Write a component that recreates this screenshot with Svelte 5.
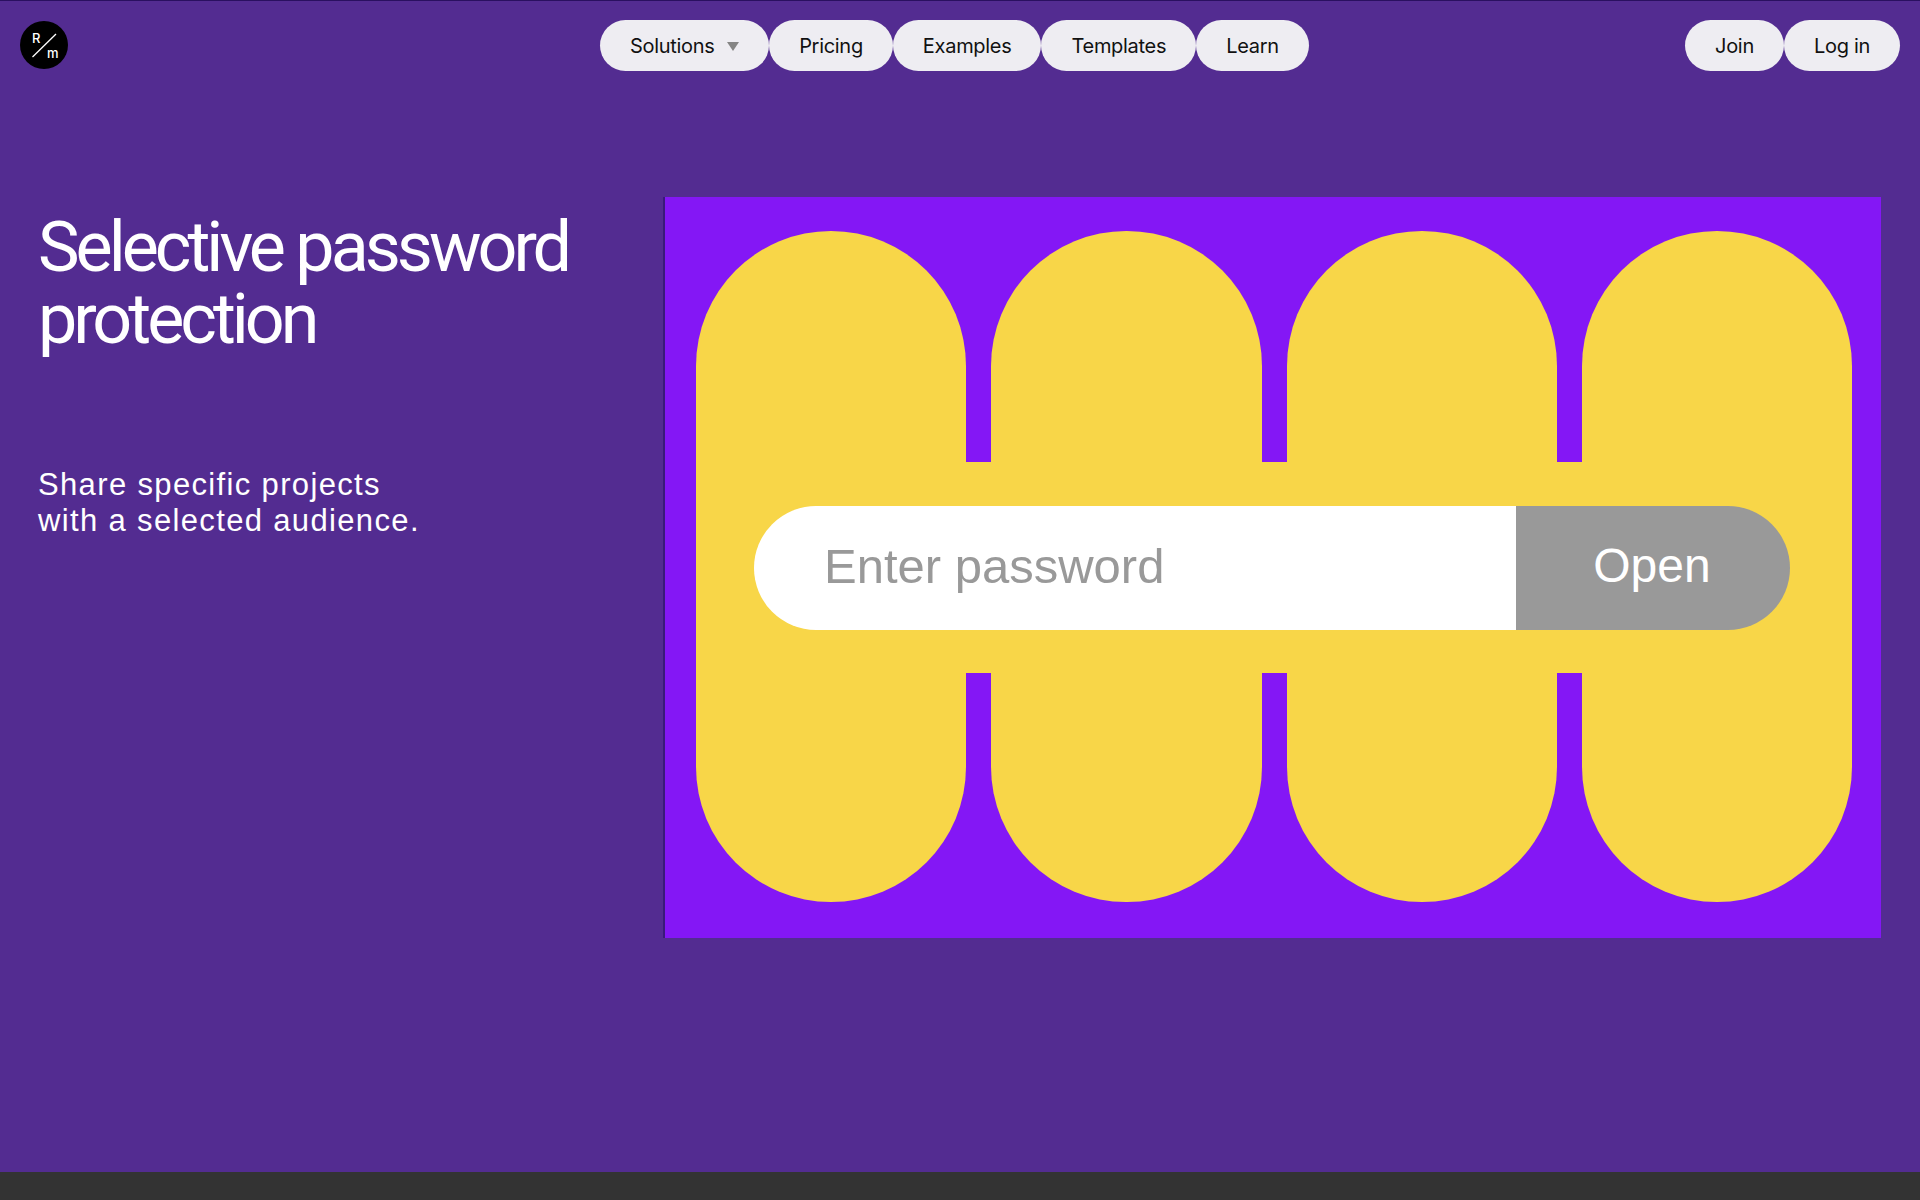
<script>
  const links = ['Pricing', 'Examples', 'Templates', 'Learn'];
  const pillars = [0, 1, 2, 3];
</script>

<div class="page">
  <header class="topbar">
    <a class="logo" href="#home" aria-label="Home">
      <svg width="48" height="48" viewBox="0 0 48 48">
        <circle cx="24" cy="24" r="24" fill="#000" />
        <line x1="12.5" y1="36" x2="36" y2="13" stroke="#fff" stroke-width="1.3" />
        <text x="12" y="22" class="logo-text">R</text>
        <text x="27" y="37" class="logo-text">m</text>
      </svg>
    </a>

    <nav class="nav">
      <button class="pill solutions">
        Solutions
        <span class="caret"></span>
      </button>
      {#each links as link}
        <button class="pill">{link}</button>
      {/each}
    </nav>

    <div class="account">
      <button class="pill">Join</button>
      <button class="pill">Log in</button>
    </div>
  </header>

  <main class="hero">
    <div class="copy">
      <h1>Selective password<br />protection</h1>
      <p>Share specific projects<br />with a selected audience.</p>
    </div>

    <div class="art">
      <div class="pillars">
        {#each pillars as p}
          <div class="pillar"></div>
        {/each}
      </div>
      <div class="band">
        <form class="password" on:submit|preventDefault>
          <input type="text" placeholder="Enter password" />
          <button type="submit">Open</button>
        </form>
      </div>
    </div>
  </main>

  <footer class="footer"></footer>
</div>

<style>
  :global(body) {
    background: #532c91;
  }

  .page {
    display: flex;
    flex-direction: column;
    height: 1200px;
    background: #532c91;
    border-top: 1px solid #2a1060;
    box-sizing: border-box;
    overflow: hidden;
  }

  .topbar {
    display: grid;
    grid-template-columns: 580px auto 1fr;
    align-items: flex-start;
    padding: 19px 20px 0 20px;
  }

  .logo {
    display: block;
    width: 48px;
    height: 48px;
    margin-top: 1px;
  }

  .logo svg {
    display: block;
  }

  .logo-text {
    font-family: 'Inter', sans-serif;
    font-size: 13px;
    font-weight: 500;
    fill: #fff;
  }

  .nav {
    display: flex;
  }

  .account {
    display: flex;
    justify-content: flex-end;
  }

  .pill {
    display: flex;
    align-items: center;
    height: 51px;
    padding: 0 30px;
    border: none;
    border-radius: 26px;
    background: #eeedf2;
    color: #111;
    font-family: 'Inter', sans-serif;
    font-size: 20px;
    letter-spacing: -0.3px;
    cursor: pointer;
  }

  .solutions {
    gap: 12.6px;
  }

  .caret {
    width: 0;
    height: 0;
    margin-top: 1px;
    border-left: 6.5px solid transparent;
    border-right: 6.5px solid transparent;
    border-top: 9px solid #858585;
  }

  .hero {
    flex: 1;
    display: flex;
    align-items: flex-start;
    padding-top: 126px;
  }

  .copy {
    flex: none;
    width: 663px;
    padding-left: 38px;
    box-sizing: border-box;
    color: #fff;
    font-family: 'Liberation Sans', sans-serif;
  }

  h1 {
    margin: 14px 0 0;
    font-family: 'Roboto', sans-serif;
    font-size: 70px;
    font-weight: 400;
    line-height: 72px;
    letter-spacing: -4px;
  }

  p {
    margin: 112px 0 0;
    font-size: 31px;
    line-height: 35.5px;
    letter-spacing: 1.35px;
  }

  .art {
    flex: none;
    position: relative;
    width: 1218px;
    height: 741px;
    box-sizing: border-box;
    padding: 34px 0 0 31px;
    background: #8417f5;
    border-left: 2px solid #3a1a7a;
  }

  .pillars {
    display: flex;
    gap: 25px;
  }

  .pillar {
    width: 270.25px;
    height: 671px;
    border-radius: 135.125px;
    background: #f8d648;
  }

  /* solid strip that joins the four pillars behind the form */
  .band {
    position: absolute;
    left: 31px;
    top: 265px;
    width: 1156px;
    height: 211px;
    display: flex;
    align-items: center;
    padding-left: 58px;
    box-sizing: border-box;
    background: #f8d648;
  }

  .password {
    display: flex;
    width: 1036px;
    height: 124px;
    border-radius: 62px;
    overflow: hidden;
  }

  .password input {
    flex: 1;
    min-width: 0;
    padding: 0 0 4px 70px;
    border: none;
    outline: none;
    background: #fff;
    font-family: 'Liberation Sans', sans-serif;
    font-size: 49px;
  }

  .password input::placeholder {
    color: #999;
    opacity: 1;
  }

  .password button {
    width: 274px;
    padding: 0 2px 4px 0;
    border: none;
    background: #999;
    color: #fff;
    font-family: 'Liberation Sans', sans-serif;
    font-size: 48px;
  }

  .footer {
    height: 28px;
    background: #333;
  }
</style>
